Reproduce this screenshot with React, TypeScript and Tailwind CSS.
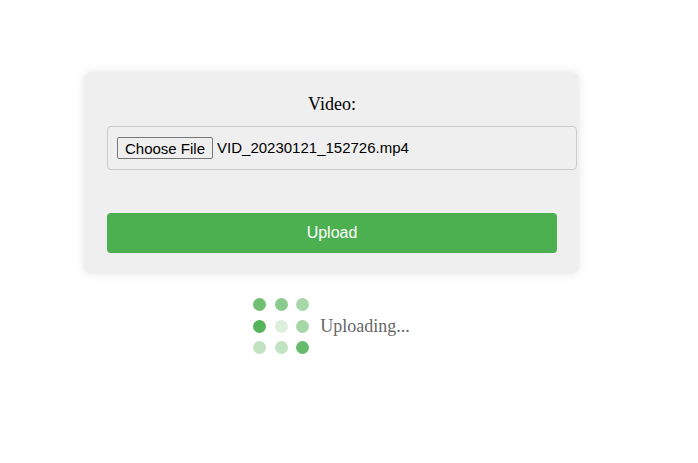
import React from 'react';

const dots = [0.8, 0.65, 0.5, 0.95, 0.2, 0.5, 0.35, 0.35, 0.85];

export default function App() {
  return (
    <div className="min-h-[463px] bg-white pt-[72px]">
      <div className="ml-[84px] w-[495px]">
        <div className="rounded-lg bg-[#efefef] pl-[23px] pr-[22px] pt-[20px] pb-[21px] shadow-[0_0_10px_rgba(0,0,0,0.1)]">
          <p className="text-center text-[18px] leading-[24px] text-black" style={{ fontFamily: '"Liberation Serif", serif' }}>
            Video:
          </p>
          <div
            className="mt-[10px] -mr-[20px] flex h-[44px] items-center rounded border border-[#ccc] px-[9px] text-[15px] text-black"
            style={{ fontFamily: '"Liberation Sans", Arial, sans-serif' }}
          >
            <span className="flex h-[22px] items-center rounded-[2px] border border-[#767676] bg-[#efefef] px-[7px] text-[15px] leading-none">
              Choose File
            </span>
            <span className="ml-[4px]">VID_20230121_152726.mp4</span>
          </div>
          <button
            className="mt-[43px] flex h-[40px] w-full items-center justify-center rounded bg-[#4caf50] text-[16px] text-white"
            style={{ fontFamily: '"Liberation Sans", Arial, sans-serif' }}
          >
            Upload
          </button>
        </div>
        <div className="mt-[24px] flex items-center justify-center gap-[11px]">
          <div className="grid grid-cols-3 gap-x-[8.5px] gap-y-[8.5px]">
            {dots.map((o, i) => (
              <div key={i} className="h-[13px] w-[13px] rounded-full bg-[#4caf50]" style={{ opacity: o }} />
            ))}
          </div>
          <span className="text-[18px] text-[#666]" style={{ fontFamily: '"Liberation Serif", serif' }}>
            Uploading...
          </span>
        </div>
      </div>
    </div>
  );
}
